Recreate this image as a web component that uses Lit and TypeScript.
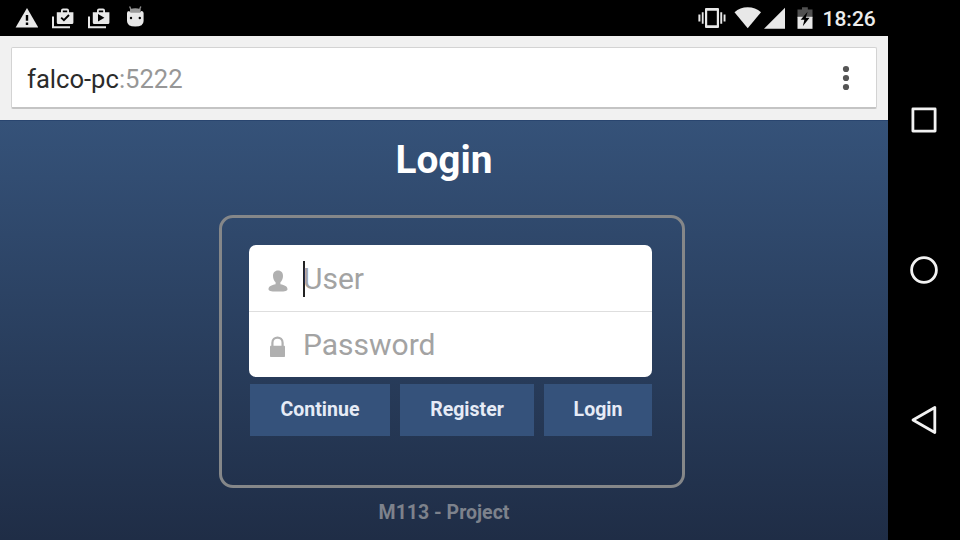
import { LitElement, html, svg, css } from "lit";
import { customElement, property } from "lit/decorators.js";

const bag = svg`<path d="M1 16.5V27.3H18" fill="none" stroke="#e8e8e8" stroke-width="2"/>
  <path fill-rule="evenodd" d="M4.8 12.2H9V10.6Q9 8.6 11 8.6H15Q17 8.6 17 10.6V12.2H21.4V22.5Q21.4 24 20 24H6.2Q4.8 24 4.8 22.5ZM10.8 12.2H15.2V10.6H10.8Z"/>`;

@customElement("status-bar")
export class StatusBar extends LitElement {
  static styles = css`
    :host { display: flex; height: 36px; background: #000; }
    svg { display: block; flex: none; height: 36px; fill: #e8e8e8; }
    .left { display: flex; gap: 14px; padding-left: 15px; }
    .android { margin-left: 2px; }
    .right { display: flex; margin-left: auto; padding-right: 11px; }
    .wifi { margin-left: 8px; }
    .signal { margin-left: 3px; }
    .battery { margin-left: 12px; }
    .clock { margin-left: 9.5px; width: 54.5px; font: 500 21px/38px Roboto, sans-serif; color: #ececec; white-space: nowrap; }
  `;
  render() {
    return html`
      <div class="left">
        <svg width="23" height="36" viewBox="0 0 23 36"><path d="M12 8L23.4 27.6H.6Z"/><path fill="#000" d="M10.8 15H13.2V20.8H10.8ZM10.8 22.5H13.2V24.9H10.8Z"/></svg>
        <svg width="22" height="36" viewBox="0 0 22 36">${bag}<path d="M9.2 17.6L11.9 20.2L17 15" fill="none" stroke="#000" stroke-width="1.9"/></svg>
        <svg width="22" height="36" viewBox="0 0 22 36">${bag}<path fill="#000" d="M10 14L16.4 17.8L10 21.6Z"/></svg>
        <svg class="android" width="20" height="36" viewBox="0 0 20 36">
          <path d="M3.6 6.5L5.2 10M14.8 6.5L13.4 10" stroke="#8c8c8c" stroke-width="1.4"/>
          <path fill="#999" d="M4 9.2Q9.2 7.4 14.6 9.2V13.5H4Z"/>
          <path d="M1 13Q1 11 3.2 11L4.6 12.8H14L15.2 11Q17.6 11 17.6 13V21Q17.6 26.6 9.3 26.6Q1 26.6 1 21Z"/>
          <circle cx="5" cy="18" r="1.2" fill="#000"/><circle cx="13.8" cy="18" r="1.2" fill="#000"/>
        </svg>
      </div>
      <div class="right">
        <svg width="28" height="36" viewBox="0 0 28 36"><path fill-rule="evenodd" d="M8 8H20Q21 8 21 9V27Q21 28 20 28H8Q7 28 7 27V9Q7 8 8 8ZM9.2 10.7V25.3H18.8V10.7Z"/><path d="M.4 14.5H2.4V21.5H.4ZM3.8 12.3H5.6V23.7H3.8ZM22.3 12.3H24.2V23.7H22.3ZM25.6 14.5H27.5V21.5H25.6Z"/></svg>
        <svg class="wifi" width="27" height="36" viewBox="0 0 27 36"><path d="M.5 12.3Q6 7.3 13.7 7.3T27 12.3L13.7 28.3Z"/></svg>
        <svg class="signal" width="21" height="36" viewBox="0 0 21 36"><path d="M21 7.8V28.8H0Z"/></svg>
        <svg class="battery" width="16" height="36" viewBox="0 0 16 36"><path fill="#505050" d="M.5 9.6H5V7.2H10.8V9.6H15.5V18H.5Z"/><path d="M.5 16.8H15.5V28.8H.5Z"/><path fill="#000" d="M10.6 11.8L3.6 19.8H7.4L5.8 26.2L12.6 17.8H8.8Z"/></svg>
        <span class="clock">18:26</span>
      </div>`;
  }
}

@customElement("address-bar")
export class AddressBar extends LitElement {
  @property() host = "";
  @property() port = "";
  static styles = css`
    :host { display: block; box-sizing: border-box; height: 84px; padding: 11px 11px 0; background: #f1f1f1; }
    .box { display: flex; align-items: center; justify-content: space-between; box-sizing: border-box; height: 62px; padding: 0 24px 0 15px; background: #fff; border: 1px solid #d3d3d3; border-bottom: 2px solid #c4c4c4; border-radius: 2px; }
    .url { font: 400 25.6px/62px Roboto, sans-serif; color: #2b2b2b; padding-top: 2px; }
    .port { color: #979797; }
    .menu { display: block; fill: #555; }
  `;
  render() {
    return html`<div class="box">
      <span class="url">${this.host}<span class="port">:${this.port}</span></span>
      <svg class="menu" width="12" height="26" viewBox="0 0 12 26"><circle cx="6" cy="4" r="3.1"/><circle cx="6" cy="13" r="3.1"/><circle cx="6" cy="22" r="3.1"/></svg>
    </div>`;
  }
}

@customElement("login-page")
export class LoginPage extends LitElement {
  static styles = css`
    :host { display: flex; flex-direction: column; align-items: center; flex: 1; min-height: 0; overflow: hidden; box-sizing: border-box; background: linear-gradient(#355279, #1f2d46); box-shadow: inset 0 1px #29456f; font-family: Roboto, sans-serif; }
    h1 { margin: 16px 0 0; height: 48px; font-size: 38.8px; line-height: 48px; font-weight: 700; color: #fff; }
    .panel { flex: none; box-sizing: border-box; width: 466px; height: 273px; margin: 31px 0 0 16px; padding: 27px 30px 0 27px; border: 3px solid #858789; border-radius: 14px; }
    .fields { width: 403px; height: 132px; background: #fff; border-radius: 7px; }
    .field { display: flex; align-items: center; box-sizing: border-box; height: 66px; padding-left: 18px; font-size: 30px; color: #a3a3a3; }
    .field + .field { border-top: 1px solid #dedede; padding-bottom: 2px; }
    .field svg { display: block; width: 22px; height: 24px; margin-top: 6px; fill: #b0b0b0; }
    .caret { width: 1.5px; height: 36px; margin: 1px -1.5px 0 0; background: #222; }
    .entry { display: flex; align-items: center; margin-left: 14px; }
    .text { line-height: 36px; padding-top: 2px; }
    .buttons { display: flex; gap: 10px; margin: 7px 0 0 1px; }
    button { height: 52px; padding: 0 0 2px; border: 0; background: #35527b; color: #e6ebf6; font: 700 19.5px Roboto, sans-serif; }
    .wide { width: 140px; }
    .mid { width: 134px; }
    .small { width: 108px; }
    footer { margin-top: 13px; font-size: 19.5px; line-height: 24px; font-weight: 700; color: #7d828c; }
  `;
  render() {
    return html`
      <h1>Login</h1>
      <div class="panel">
        <div class="fields">
          <div class="field">
            <svg viewBox="0 0 22 24"><path d="M11 1.5C14.3 1.5 16 3.8 16 7C16 10 14.7 12 13.4 13.2V15.2C17.5 16 20.5 17.2 20.5 20.2C20.5 22.2 16 22.6 11 22.6S1.5 22.2 1.5 20.2C1.5 17.2 4.5 16 8.6 15.2V13.2C7.3 12 6 10 6 7C6 3.8 7.7 1.5 11 1.5Z"/></svg>
            <div class="entry"><span class="caret"></span><span class="text">User</span></div>
          </div>
          <div class="field">
            <svg viewBox="0 0 22 24"><path d="M5.4 12V7.8C5.4 0.9 15.6 0.9 15.6 7.8V12" fill="none" stroke="#b0b0b0" stroke-width="2.2"/><rect x="3" y="10.8" width="15" height="11.2" rx=".7"/></svg>
            <div class="entry"><span class="text">Password</span></div>
          </div>
        </div>
        <div class="buttons">
          <button class="wide">Continue</button>
          <button class="mid">Register</button>
          <button class="small">Login</button>
        </div>
      </div>
      <footer>M113 - Project</footer>`;
  }
}

@customElement("app-root")
export class AppRoot extends LitElement {
  static styles = css`
    :host { display: flex; width: 960px; height: 540px; overflow: hidden; background: #000; }
    .screen { display: flex; flex-direction: column; width: 888px; height: 540px; }
    .nav { display: flex; flex-direction: column; align-items: center; gap: 120px; width: 72px; padding-top: 105px; box-sizing: border-box; }
    .nav svg { display: block; flex: none; fill: none; stroke: #f2f2f2; stroke-width: 2.8; stroke-linejoin: round; }
  `;
  render() {
    return html`
      <div class="screen">
        <status-bar></status-bar>
        <address-bar host="falco-pc" port="5222"></address-bar>
        <login-page></login-page>
      </div>
      <div class="nav">
        <svg width="30" height="30" viewBox="0 0 30 30"><rect x="3.9" y="3.9" width="22.2" height="22.2"/></svg>
        <svg width="30" height="30" viewBox="0 0 30 30"><circle cx="15" cy="15" r="12.4"/></svg>
        <svg width="30" height="30" viewBox="0 0 30 30"><path d="M4 15L25.8 2.5V27.5Z"/></svg>
      </div>`;
  }
}
